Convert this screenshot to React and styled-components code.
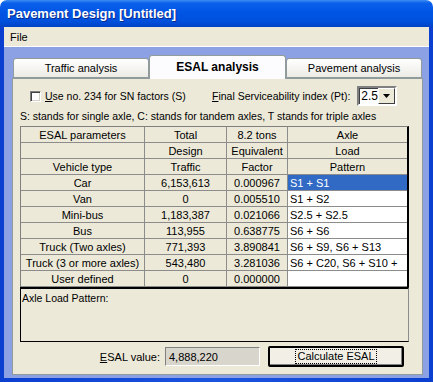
import React from 'react';
import styled, { createGlobalStyle } from 'styled-components';

const rows = [
  { type: 'Car', traffic: '6,153,613', factor: '0.000967', pattern: 'S1 + S1', selected: true },
  { type: 'Van', traffic: '0', factor: '0.005510', pattern: 'S1 + S2' },
  { type: 'Mini-bus', traffic: '1,183,387', factor: '0.021066', pattern: 'S2.5 + S2.5' },
  { type: 'Bus', traffic: '113,955', factor: '0.638775', pattern: 'S6 + S6' },
  { type: 'Truck (Two axles)', traffic: '771,393', factor: '3.890841', pattern: 'S6 + S9, S6 + S13' },
  { type: 'Truck (3 or more axles)', traffic: '543,480', factor: '3.281036', pattern: 'S6 + C20, S6 + S10 +' },
  { type: 'User defined', traffic: '0', factor: '0.000000', pattern: '' },
];

const headers = [
  ['ESAL parameters', 'Total', '8.2 tons', 'Axle'],
  ['', 'Design', 'Equivalent', 'Load'],
  ['Vehicle type', 'Traffic', 'Factor', 'Pattern'],
];

const App = () => {
  return (
    <>
      <GlobalStyle />
      <Window>
        <TitleBar>Pavement Design [Untitled]</TitleBar>
        <Frame>
          <MenuBar>
            <MenuItem>File</MenuItem>
          </MenuBar>
          <Client>
            <TabStrip>
              <Tab>Traffic analysis</Tab>
              <Tab active>ESAL analysis</Tab>
              <Tab>Pavement analysis</Tab>
            </TabStrip>
            <Panel>
              <OptionsRow>
                <CheckLabel>
                  <CheckBox />
                  <span><u>U</u>se no. 234 for SN factors (S)</span>
                </CheckLabel>
                <span><u>F</u>inal Serviceability index (Pt):</span>
                <Select>
                  <SelectValue>2.5</SelectValue>
                  <SelectButton>
                    <svg width="7" height="4" viewBox="0 0 7 4">
                      <path d="M0 0h7L3.5 4z" fill="#000" />
                    </svg>
                  </SelectButton>
                </Select>
              </OptionsRow>
              <Note>S: stands for single axle, C: stands for tandem axles, T stands for triple axles</Note>
              <Grid>
                {headers.map((h, i) =>
                  h.map((text, j) => (
                    <Cell key={`h${i}${j}`} last={j === 3}>{text}</Cell>
                  ))
                )}
                {rows.map((r) => (
                  <React.Fragment key={r.type}>
                    <Cell>{r.type}</Cell>
                    <Cell>{r.traffic}</Cell>
                    <Cell>{r.factor}</Cell>
                    <Cell last data selected={r.selected}>{r.pattern}</Cell>
                  </React.Fragment>
                ))}
              </Grid>
              <PatternBox>Axle Load Pattern:</PatternBox>
              <BottomRow>
                <span><u>E</u>SAL value:</span>
                <ValueBox>4,888,220</ValueBox>
                <Button>
                  <Focus>Calculate ESAL</Focus>
                </Button>
              </BottomRow>
            </Panel>
          </Client>
        </Frame>
      </Window>
    </>
  );
};

export default App;

const GlobalStyle = createGlobalStyle`
  body {
    margin: 0;
    background: #fff;
  }
`;

const Window = styled.div`
  width: 433px;
  height: 382px;
  display: flex;
  flex-direction: column;
  font-family: "Liberation Sans", Arial, sans-serif;
  font-size: 10.5px;
  color: #000;
  overflow: hidden;
`;

const TitleBar = styled.div`
  height: 27px;
  flex: none;
  box-sizing: border-box;
  padding: 0 7px;
  display: flex;
  align-items: center;
  border-radius: 7px 7px 0 0;
  background: linear-gradient(180deg, #3d8cf5 0%, #0a5fea 12%, #0055e5 45%, #0050dc 80%, #0042c4 100%);
  color: #fff;
  font-weight: bold;
  font-size: 13px;
  text-shadow: 1px 1px 0 #0a2a8a;
`;

const Frame = styled.div`
  flex: 1;
  display: flex;
  flex-direction: column;
  padding: 0 4px 4px 4px;
  background: linear-gradient(90deg, #0b3fd0, #1a55e0 50%, #0b3fd0);
`;

const MenuBar = styled.div`
  height: 19px;
  flex: none;
  display: flex;
  align-items: center;
  background: #ece9d8;
  border-bottom: 1px solid #fff;
  font-size: 11px;
`;

const MenuItem = styled.span`
  padding: 0 6px;
`;

const Client = styled.div`
  flex: 1;
  display: flex;
  flex-direction: column;
  padding: 8px 6px 3px 8px;
  background: #8ba1e3;
`;

const TabStrip = styled.div`
  height: 23px;
  display: flex;
  align-items: flex-end;
  padding-left: 1px;
  position: relative;
  z-index: 1;
`;

const Tab = styled.div`
  box-sizing: border-box;
  width: ${(p) => (p.active ? 137 : 136)}px;
  height: ${(p) => (p.active ? 24 : 20)}px;
  margin-bottom: ${(p) => (p.active ? -1 : 0)}px;
  display: flex;
  align-items: center;
  justify-content: center;
  border: 1px solid #919b9c;
  border-bottom: ${(p) => (p.active ? 'none' : '1px solid #919b9c')};
  border-radius: 3px 3px 0 0;
  background: ${(p) => (p.active ? '#fcfcfe' : 'linear-gradient(180deg, #fff, #ecebe5)')};
  font-weight: ${(p) => (p.active ? 'bold' : 'normal')};
  font-size: ${(p) => (p.active ? 12 : 11)}px;
  padding-bottom: ${(p) => (p.active ? 2 : 0)}px;
`;

const Panel = styled.div`
  flex: 1;
  box-sizing: border-box;
  border: 1px solid #919b9c;
  background: #ece9d8;
  padding: 7px 7px 0 7px;
  display: flex;
  flex-direction: column;
`;

const OptionsRow = styled.div`
  height: 20px;
  display: flex;
  align-items: center;
  padding-left: 10px;
`;

const CheckLabel = styled.label`
  width: 182px;
  display: flex;
  align-items: center;
  gap: 4px;
`;

const CheckBox = styled.span`
  width: 9px;
  height: 9px;
  background: #fff;
  border-top: 1px solid #808080;
  border-left: 1px solid #808080;
  border-right: 1px solid #fff;
  border-bottom: 1px solid #fff;
  box-shadow: inset 1px 1px 0 #404040, inset -1px -1px 0 #d4d0c8;
`;

const Select = styled.div`
  box-sizing: border-box;
  width: 40px;
  height: 20px;
  margin-left: 7px;
  display: flex;
  background: #fff;
  border: 2px solid;
  border-color: #808080 #fff #fff #808080;
  box-shadow: inset 1px 1px 0 #404040;
`;

const SelectValue = styled.span`
  flex: 1;
  padding-left: 2px;
  line-height: 16px;
  font-size: 12px;
`;

const SelectButton = styled.span`
  width: 15px;
  display: flex;
  align-items: center;
  justify-content: center;
  background: #ece9d8;
  border: 1px solid;
  border-color: #fff #404040 #404040 #fff;
`;

const Note = styled.div`
  margin-top: 4px;
  height: 16px;
  line-height: 13px;
`;

const Grid = styled.div`
  width: 389px;
  box-sizing: border-box;
  display: grid;
  grid-template-columns: 124px 82px 61px 1fr;
  grid-auto-rows: 16px;
  border-top: 1px solid #808080;
  border-left: 1px solid #808080;
  border-right: 2px solid #000;
`;

const Cell = styled.div`
  box-sizing: border-box;
  display: flex;
  align-items: center;
  justify-content: ${(p) => (p.data ? 'flex-start' : 'center')};
  padding-left: ${(p) => (p.data ? 2 : 0)}px;
  font-size: 11px;
  white-space: nowrap;
  overflow: hidden;
  border-right: ${(p) => (p.last ? 'none' : '1px solid #8c8c8c')};
  border-bottom: 1px solid #8c8c8c;
  background: ${(p) => (p.selected ? '#316ac5' : p.data ? '#fff' : '#ece9d8')};
  color: ${(p) => (p.selected ? '#fff' : '#000')};
`;

const PatternBox = styled.div`
  width: 389px;
  height: 55px;
  box-sizing: border-box;
  border-top: 2px solid #000;
  border-left: 1px solid #000;
  border-right: 1px solid #8c8c8c;
  border-bottom: 1px solid #000;
  padding: 3px 0 0 1px;
`;

const BottomRow = styled.div`
  width: 389px;
  margin-top: 4px;
  height: 21px;
  display: flex;
  align-items: center;
  justify-content: flex-end;
  padding-right: 5px;
  box-sizing: border-box;
  font-size: 11px;
`;

const ValueBox = styled.div`
  box-sizing: border-box;
  width: 95px;
  height: 19px;
  margin-left: 5px;
  padding-left: 3px;
  display: flex;
  align-items: center;
  background: #d8d5cc;
  border: 1px solid;
  border-color: #808080 #fff #fff #808080;
`;

const Button = styled.div`
  box-sizing: border-box;
  width: 136px;
  height: 21px;
  margin-left: 8px;
  display: flex;
  align-items: center;
  justify-content: center;
  border: 2px solid #000;
  border-radius: 2px;
  background: #f1efe6;
  box-shadow: inset -1px -1px 0 #808080;
`;

const Focus = styled.span`
  outline: 1px dotted #000;
  padding: 0 1px;
  line-height: 13px;
`;
